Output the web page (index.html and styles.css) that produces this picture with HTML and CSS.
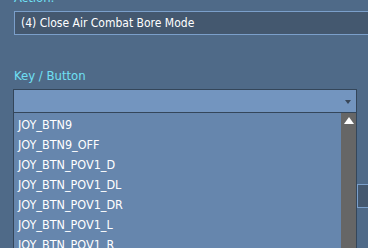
FILE: index.html
```html
<!DOCTYPE html>
<html lang="en">
<head>
  <meta charset="UTF-8">
  <title>Key binding</title>
  <link rel="stylesheet" href="styles.css">
</head>
<body>

  <!-- binding editor -->
  <div class="editor">
    <div class="label label-top">Action:</div>
    <div class="field">(4) Close Air Combat Bore Mode</div>

    <div class="label label-key">Key / Button</div>
    <div class="select"><span class="select-arrow"></span></div>

    <div class="field field-under"></div>

    <!-- open dropdown -->
    <div class="dropdown">
      <ul class="options">
        <li>JOY_BTN9</li>
        <li>JOY_BTN9_OFF</li>
        <li>JOY_BTN_POV1_D</li>
        <li>JOY_BTN_POV1_DL</li>
        <li>JOY_BTN_POV1_DR</li>
        <li>JOY_BTN_POV1_L</li>
        <li>JOY_BTN_POV1_R</li>
      </ul>
      <div class="scrollbar"><span class="scroll-up"></span></div>
    </div>
  </div>

</body>
</html>
```

FILE: styles.css
```css
* { margin: 0; padding: 0; box-sizing: border-box; }
html, body { height: 100%; overflow: hidden; }
body {
  font-family: "DejaVu Sans Condensed", "DejaVu Sans", sans-serif;
  font-stretch: condensed;
  font-size: 12px;
  background: #4f6a88;
  color: #fff;
}

.editor {
  display: flow-root;
  position: relative;
  padding-left: 14px;
}

.label {
  color: #6fe0f4;
  line-height: 16px;
  font-size: 13px;
}
.label-top { margin-top: -10px; margin-bottom: 5px; }
.label-key { margin-top: 33px; margin-bottom: 5px; }

.field {
  height: 24px;
  line-height: 22px;
  padding-left: 6px;
  background: #44586f;
  border: 1px solid #7b9fca;
  border-right: none;
  white-space: nowrap;
}
.field-under { margin-top: 71px; margin-left: 343px; }

.select {
  position: relative;
  margin-left: -1px;
  width: 344px;
  height: 24px;
  background: #7395bf;
  border: 1px solid #34465a;
}
.select-arrow {
  position: absolute;
  right: 5px;
  top: 10px;
  border-left: 3.5px solid transparent;
  border-right: 3.5px solid transparent;
  border-top: 4px solid #394759;
}

.dropdown {
  position: absolute;
  left: 13px;
  top: 113px;
  width: 344px;
  height: 200px;
  display: flex;
  background: #6686ad;
  border-left: 1px solid #34465a;
  border-right: 1px solid #34465a;
}
.options {
  flex: 1;
  list-style: none;
  padding: 2px 0 0 4px;
  font-size: 12.5px;
}
.options li { line-height: 20px; }

.scrollbar {
  width: 15px;
  background: #666666;
  display: flex;
  justify-content: center;
}
.scroll-up {
  margin-top: 4px;
  width: 0;
  height: 0;
  border-left: 5.5px solid transparent;
  border-right: 5.5px solid transparent;
  border-bottom: 7px solid #ffffff;
}
```
